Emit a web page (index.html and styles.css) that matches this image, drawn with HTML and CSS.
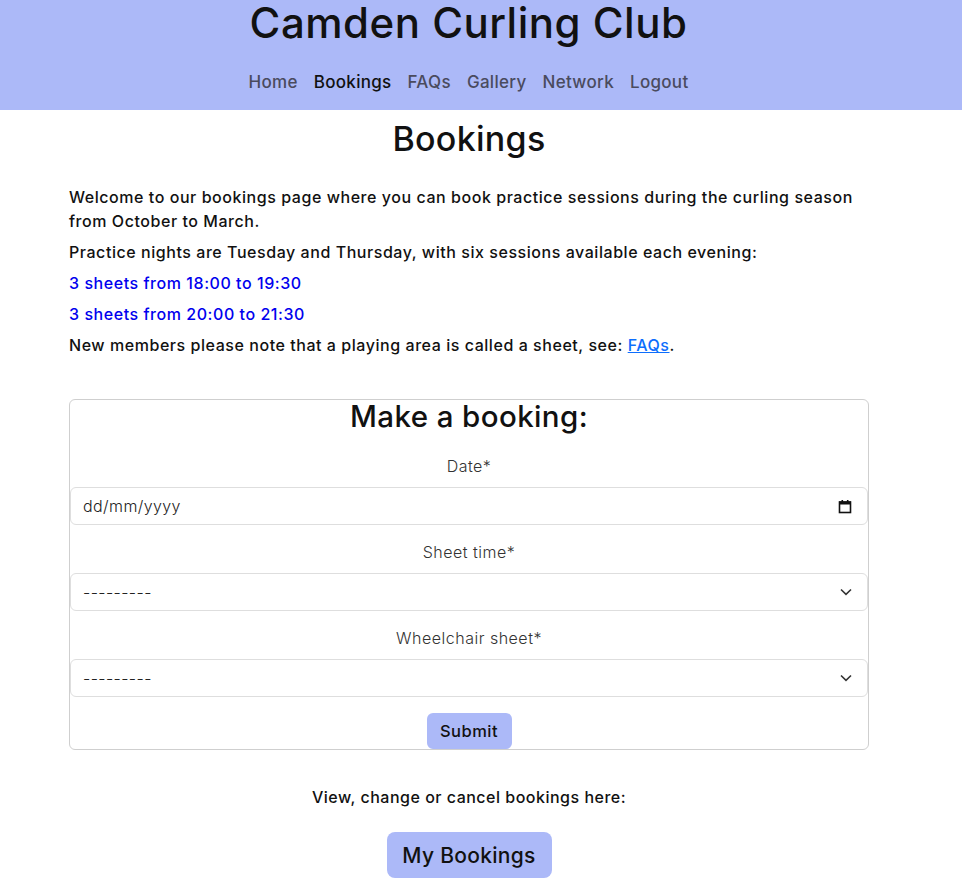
FILE: index.html
```html
<!DOCTYPE html>
<html lang="en">
<head>
<meta charset="utf-8">
<title>Camden Curling Club - Bookings</title>
<link rel="stylesheet" href="styles.css">
</head>
<body>
<header class="site-header">
  <div class="inner">
    <h1 class="brand">Camden Curling Club</h1>
    <nav class="nav">
      <a href="#" class="nav-link">Home</a>
      <a href="#" class="nav-link active">Bookings</a>
      <a href="#" class="nav-link">FAQs</a>
      <a href="#" class="nav-link">Gallery</a>
      <a href="#" class="nav-link">Network</a>
      <a href="#" class="nav-link">Logout</a>
    </nav>
  </div>
</header>
<main class="content">
  <h2 class="page-title">Bookings</h2>
  <p class="text">Welcome to our bookings page where you can book practice sessions during the curling season from October to March.</p>
  <p class="text">Practice nights are Tuesday and Thursday, with six sessions available each evening:</p>
  <p class="text blue">3 sheets from 18:00 to 19:30</p>
  <p class="text blue">3 sheets from 20:00 to 21:30</p>
  <p class="text">New members please note that a playing area is called a sheet, see: <a href="#" class="link">FAQs</a>.</p>

  <form class="booking">
    <h3 class="form-title">Make a booking:</h3>
    <label class="label">Date*</label>
    <div class="field">
      <span class="field-text">dd/mm/yyyy</span>
      <svg class="cal" width="14" height="15" viewBox="0 0 14 15"><rect x="1.5" y="3" width="11" height="10.5" fill="none" stroke="#111" stroke-width="1.6"/><rect x="1" y="2.5" width="12" height="3" fill="#111"/><rect x="3.5" y="1" width="1.6" height="2" fill="#111"/><rect x="8.9" y="1" width="1.6" height="2" fill="#111"/></svg>
    </div>
    <label class="label">Sheet time*</label>
    <div class="field">
      <span class="field-text">---------</span>
      <svg class="chev" width="12" height="8" viewBox="0 0 12 8"><path d="M1 1.5 L6 6.3 L11 1.5" fill="none" stroke="#333" stroke-width="1.6"/></svg>
    </div>
    <label class="label">Wheelchair sheet*</label>
    <div class="field">
      <span class="field-text">---------</span>
      <svg class="chev" width="12" height="8" viewBox="0 0 12 8"><path d="M1 1.5 L6 6.3 L11 1.5" fill="none" stroke="#333" stroke-width="1.6"/></svg>
    </div>
    <button type="button" class="btn submit">Submit</button>
  </form>

  <p class="view">View, change or cancel bookings here:</p>
  <a href="#" class="btn big">My Bookings</a>
</main>
</body>
</html>
```

FILE: styles.css
```css
* { box-sizing: border-box; }
html, body { margin: 0; padding: 0; background: #fff; }
body {
  font-family: "Inter", "DejaVu Sans", sans-serif;
  color: #111;
}
.site-header {
  background: #acb9f8;
  height: 110px;
}
.inner {
  width: 937px;
  display: flex;
  flex-direction: column;
  align-items: center;
}
.brand {
  margin: 0;
  font-size: 42px;
  line-height: 46px;
  font-weight: 500;
  color: #111;
  letter-spacing: 0.5px;
}
.nav {
  margin-top: 24px;
  display: flex;
  gap: 16px;
  line-height: 24px;
}
.nav-link {
  color: #4a4b5e;
  text-decoration: none;
  font-size: 17px;
  letter-spacing: 0.3px;
  font-weight: 500;
}
.nav-link.active { color: #111; }
.content {
  width: 800px;
  margin-left: 69px;
  display: flex;
  flex-direction: column;
  align-items: flex-start;
}
.page-title {
  align-self: center;
  margin: 9px 0 26px;
  font-size: 34px;
  line-height: 40px;
  letter-spacing: 0.3px;
  font-weight: 500;
}
.text {
  margin: 0 0 7px;
  font-size: 16px;
  line-height: 24px;
  letter-spacing: 0.55px;
  font-weight: 500;
  color: #111;
}
.blue { color: #0000ee; }
.link { color: #0d6efd; }
.booking {
  margin-top: 35px;
  align-self: stretch;
  border: 1px solid #cfcfcf;
  border-radius: 6px;
  display: flex;
  flex-direction: column;
  align-items: center;
}
.form-title {
  margin: 0 0 21px;
  font-size: 29.5px;
  line-height: 33px;
  letter-spacing: 0.4px;
  font-weight: 500;
}
.label {
  font-size: 16px;
  line-height: 24px;
  letter-spacing: 0.5px;
  font-weight: 300;
  color: #333;
  margin-bottom: 9px;
}
.field {
  align-self: stretch;
  height: 38px;
  border: 1px solid #dedede;
  border-radius: 6px;
  display: flex;
  align-items: center;
  justify-content: space-between;
  padding: 0 13px 0 12px;
  margin-bottom: 15px;
  font-size: 16px;
  letter-spacing: 0.4px;
  font-weight: 300;
  color: #222;
}
.cal { margin-right: 2px; }
.chev { margin-right: 2px; }
.btn {
  background: #acb9f8;
  border: none;
  border-radius: 6px;
  color: #111;
  font-family: inherit;
  font-weight: 500;
  text-decoration: none;
  display: inline-flex;
  align-items: center;
  justify-content: center;
}
.submit {
  margin-top: 1px;
  width: 85px;
  height: 36px;
  font-size: 16.5px;
  letter-spacing: 0.5px;
}
.view {
  align-self: center;
  margin: 35px 0 23px;
  font-size: 16px;
  line-height: 24px;
  letter-spacing: 0.5px;
  font-weight: 500;
}
.big {
  align-self: center;
  width: 165px;
  height: 46px;
  font-size: 21px;
  letter-spacing: 0.3px;
  border-radius: 8px;
}
```
